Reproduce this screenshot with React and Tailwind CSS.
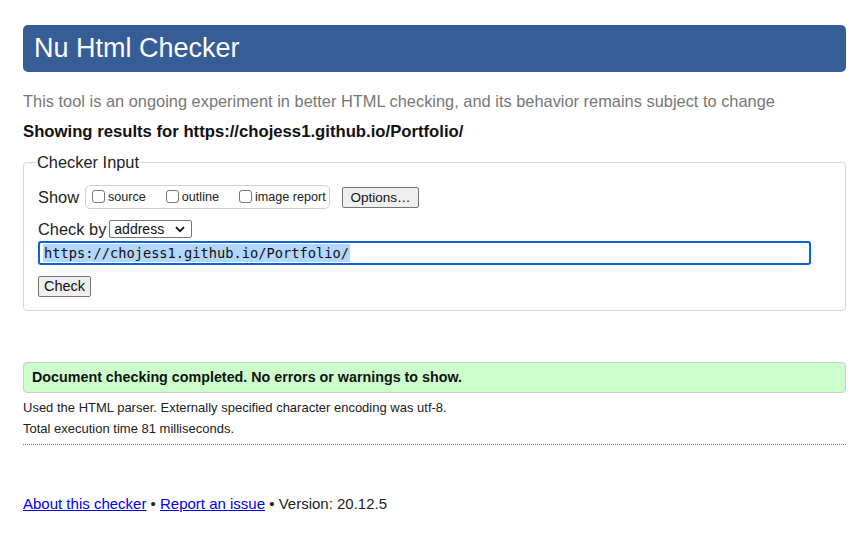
import React from "react";

function Box({ label, mr }) {
  return (
    <label className={`flex items-center shrink-0 whitespace-nowrap ${mr}`}>
      <span className="inline-block shrink-0 w-[13px] h-[13px] border border-[#767676] rounded-[3px] bg-white mr-[3px]" />
      <span className="text-[12.6px] text-[#222] whitespace-nowrap">{label}</span>
    </label>
  );
}

export default function App() {
  return (
    <div className="w-[864px] h-[550px] bg-white text-black font-['Liberation_Sans',Arial,sans-serif] overflow-hidden">
      <div className="pl-[23px] w-[846px] pt-[25px]">
        <h1 className="h-[47px] bg-[#365d95] rounded-[5px] text-white text-[27px] leading-[47px] pl-[11px]">
          Nu Html Checker
        </h1>
        <p className="mt-[19px] text-[16.4px] leading-[20px] text-[#777]">
          This tool is an ongoing experiment in better HTML checking, and its behavior remains subject to change
        </p>
        <p className="mt-[11px] text-[16.7px] leading-[20px] font-bold text-[#111]">
          Showing results for https://chojess1.github.io/Portfolio/
        </p>
        <fieldset className="mt-[10px] border border-[#d6d6d6] rounded-[4px] pl-[14px] pr-[34px] pb-[12px] pt-0">
          <legend className="text-[16.4px] leading-[20px] text-[#222] px-[1px] ml-[-2px]">Checker Input</legend>
          <div className="flex items-center mt-[13px] h-[24px]">
            <span className="text-[16.4px] text-[#222] mr-[6px]">Show</span>
            <div className="flex items-center shrink-0 h-[24px] w-[245px] border border-[#d0d0d0] rounded-[5px] pl-[6px]">
              <Box label="source" mr="mr-[20px]" />
              <Box label="outline" mr="mr-[20px]" />
              <Box label="image report" mr="" />
            </div>
            <button className="ml-[12px] shrink-0 h-[21px] w-[77px] border border-[#767676] rounded-[2px] bg-[#efefef] text-[13.5px] text-[#111] leading-[19px]">
              Options…
            </button>
          </div>
          <div className="flex items-center mt-[10px] h-[20px]">
            <span className="text-[16.4px] text-[#222] mr-[3px]">Check by</span>
            <div className="flex items-center justify-between w-[83px] h-[18px] border border-[#767676] rounded-[2px] bg-white px-[4px]">
              <span className="text-[14px] leading-[16px] text-[#111]">address</span>
              <svg width="10" height="7" viewBox="0 0 10 7" className="mr-[2px]">
                <path d="M1 1.2 L5 5.2 L9 1.2" fill="none" stroke="#111" strokeWidth="1.8" />
              </svg>
            </div>
          </div>
          <div className="mt-[2px] h-[24px] w-[773px] border-2 border-[#0a64d6] rounded-[3px] flex items-center pl-[3px]">
            <span className="bg-[#b3d7fe] text-[13.7px] leading-[18px] font-['DejaVu_Sans_Mono',monospace] text-[#111] px-[1px]">
              https://chojess1.github.io/Portfolio/
            </span>
          </div>
          <button className="mt-[11px] h-[21px] w-[53px] border border-[#767676] rounded-[2px] bg-[#efefef] text-[14.5px] text-[#111] leading-[19px]">
            Check
          </button>
        </fieldset>
        <div className="mt-[51px] h-[31px] bg-[#ccffcc] border border-[#cccccc] rounded-[4px] pl-[8px] flex items-center">
          <span className="text-[14.3px] font-bold text-[#111]">Document checking completed. No errors or warnings to show.</span>
        </div>
        <p className="mt-[7px] text-[13px] leading-[16px] text-[#222]">
          Used the HTML parser. Externally specified character encoding was utf-8.
        </p>
        <p className="mt-[5px] text-[13px] leading-[16px] text-[#222]">Total execution time 81 milliseconds.</p>
        <div className="mt-[7px] border-t border-dotted border-[#777]" />
        <p className="mt-[50px] text-[15px] leading-[18px] text-[#222]">
          <a href="#" className="text-[#0000ee] underline">About this checker</a>
          {" • "}
          <a href="#" className="text-[#0000ee] underline">Report an issue</a>
          {" • Version: 20.12.5"}
        </p>
      </div>
    </div>
  );
}
